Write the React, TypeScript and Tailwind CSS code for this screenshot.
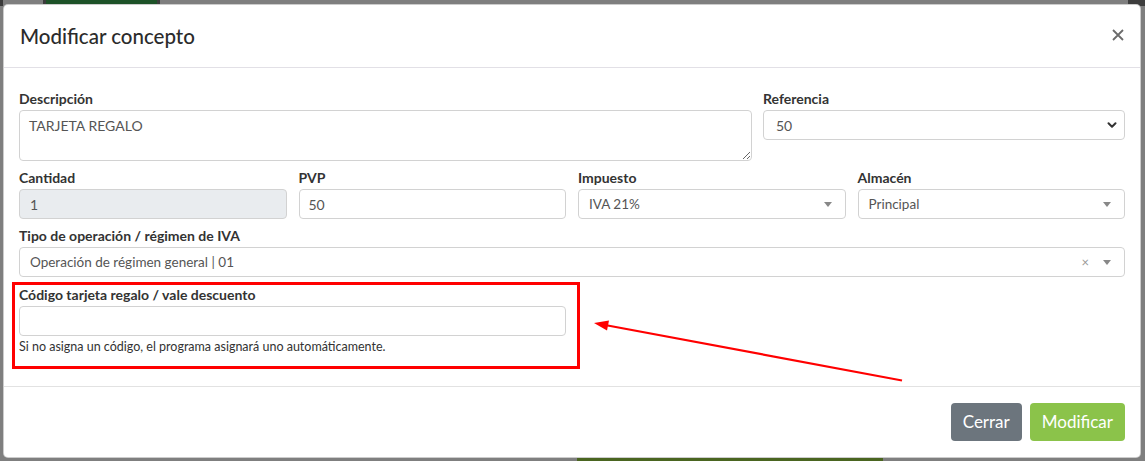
import { ChevronDown } from "lucide-react";

function Caret() {
  return (
    <svg width="8" height="5" viewBox="0 0 8 5" className="shrink-0">
      <polygon points="0,0 8,0 4,5" fill="#888" />
    </svg>
  );
}

function Label({ children }: { children: React.ReactNode }) {
  return (
    <label className="block text-[14px] leading-[20px] mb-[1px] font-bold text-[#333]">
      {children}
    </label>
  );
}

function Select2({ value, clear }: { value: string; clear?: boolean }) {
  return (
    <div className="h-[30px] flex items-center border border-[#d2d2d2] rounded-[4px] bg-white pl-[10px] pr-[13px] text-[13.5px] text-[#555]">
      <span className="flex-1 truncate">{value}</span>
      {clear && <span className="text-[#999] text-[13px] leading-none mr-[14px]">×</span>}
      <Caret />
    </div>
  );
}

export default function App() {
  return (
    <div
      className="relative w-[1145px] h-[461px] bg-[#7f7f7f] overflow-hidden pt-[4px] pl-[3px]"
      style={{ fontFamily: "Lato, 'Noto Sans', sans-serif" }}
    >
      {/* page behind the backdrop */}
      <div className="absolute left-[43px] top-0 w-[117px] h-[6px] bg-[#1d5228] border-x-[3px] border-[#3c3c3c]" />
      <div className="absolute left-0 top-0 w-[3px] h-[6px] bg-[#3a3a3a]" />
      <div className="absolute left-[1128px] top-0 w-[17px] h-[6px] bg-[#3d3d3d]" />
      <div className="absolute left-[577px] top-[456px] w-[306px] h-[6px] bg-[#4a6520]" />

      <div className="relative w-[1138px] h-[454px] bg-white rounded-[5px] border border-black/20 flex flex-col overflow-hidden">
        {/* header */}
        <div className="h-[63px] shrink-0 border-b border-[#e2e0e6] flex items-center justify-between pl-[16px] pr-[16px]">
          <h5 className="text-[20.5px] font-medium text-[#2b2b2b]">Modificar concepto</h5>
          <svg width="12" height="12" viewBox="0 0 12 12" className="mt-[-2px]">
            <path d="M1 1 L11 11 M11 1 L1 11" stroke="#6b6b6b" strokeWidth="1.8" />
          </svg>
        </div>

        {/* body */}
        <div className="flex-1 px-[15px] pt-[21px] flex flex-col gap-y-[7px]">
          <div className="grid grid-cols-[733px_1fr] gap-x-[11px]">
            <div>
              <Label>Descripción</Label>
              <textarea
                defaultValue="TARJETA REGALO"
                className="block w-full h-[51px] border border-[#d2d2d2] rounded-[4px] px-[9px] py-[6px] text-[14px] text-[#555] leading-[18px] outline-none"
              />
            </div>
            <div>
              <Label>Referencia</Label>
              <div className="h-[30px] flex items-center border border-[#d2d2d2] rounded-[4px] pl-[12px] pr-[5px] text-[14px] text-[#555]">
                <span className="flex-1">50</span>
                <ChevronDown size={14} strokeWidth={3.5} color="#333" />
              </div>
            </div>
          </div>

          <div className="grid grid-cols-4 gap-x-[12px]">
            <div>
              <Label>Cantidad</Label>
              <div className="h-[30px] flex items-center border border-[#d2d2d2] rounded-[4px] bg-[#e9ecef] px-[10px] text-[14px] text-[#555]">
                1
              </div>
            </div>
            <div>
              <Label>PVP</Label>
              <div className="h-[30px] flex items-center border border-[#d2d2d2] rounded-[4px] bg-white px-[9px] text-[14px] text-[#555]">
                50
              </div>
            </div>
            <div>
              <Label>Impuesto</Label>
              <Select2 value="IVA 21%" />
            </div>
            <div>
              <Label>Almacén</Label>
              <Select2 value="Principal" />
            </div>
          </div>

          <div>
            <Label>Tipo de operación / régimen de IVA</Label>
            <Select2 value="Operación de régimen general | 01" clear />
          </div>

          <div className="grid grid-cols-4 gap-x-[12px] mt-[1px]">
            <div className="col-span-2">
              <Label>Código tarjeta regalo / vale descuento</Label>
              <div className="h-[30px] border border-[#d2d2d2] rounded-[4px] bg-white" />
              <p className="mt-[3px] text-[12.5px] leading-[16px] text-[#333]">
                Si no asigna un código, el programa asignará uno automáticamente.
              </p>
            </div>
          </div>
        </div>

        {/* footer */}
        <div className="h-[71px] shrink-0 border-t border-[#e2e2e2] flex items-center justify-end gap-x-[8px] pr-[15px]">
          <button className="h-[38px] px-[12px] rounded-[4px] bg-[#6c757d] text-white text-[17px]">
            Cerrar
          </button>
          <button className="h-[38px] px-[12px] rounded-[4px] bg-[#8bc34a] text-white text-[17px]">
            Modificar
          </button>
        </div>
      </div>

      {/* annotation overlay */}
      <svg className="absolute left-0 top-0 pointer-events-none" width="1145" height="461">
        <rect x="13.5" y="283.5" width="565" height="84" fill="none" stroke="#ff0000" strokeWidth="3" />
        <line x1="902" y1="380.5" x2="605" y2="325" stroke="#ff0000" strokeWidth="2.2" />
        <polygon points="594,323 609,320.5 607,330.5" fill="#ff0000" />
      </svg>
    </div>
  );
}
